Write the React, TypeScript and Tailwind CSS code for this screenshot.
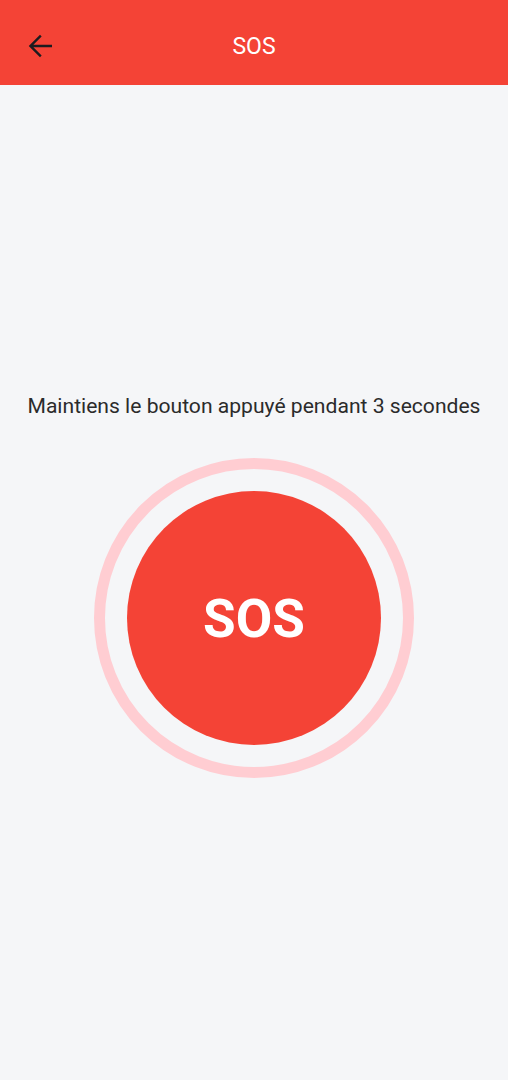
export default function App() {
  return (
    <div className="min-h-screen w-full bg-[#f5f6f8] flex flex-col" style={{ fontFamily: "Roboto, 'Noto Sans', sans-serif" }}>
      <header className="h-[85px] bg-[#f44336] flex items-center relative shrink-0">
        <button className="absolute left-[22px] top-[28px] w-[36px] h-[36px] flex items-center justify-center">
          <svg width="36" height="36" viewBox="0 0 24 24" fill="#1c1b1f">
            <path d="M20 11.1H7.6l5.5-5.5L12 4.5l-7.5 7.5 7.5 7.5 1.1-1.1-5.5-5.5H20v-1.8z" />
          </svg>
        </button>
        <h1 className="w-full text-center text-white text-[23px] leading-none pt-[7px]">SOS</h1>
      </header>

      <main className="flex flex-col items-center pt-[308px]">
        <p className="text-[21.1px] leading-[26px] text-[#2b2b2b]">
          Maintiens le bouton appuyé pendant 3 secondes
        </p>
        <div className="mt-[39px] w-[320px] h-[320px] rounded-full border-[11px] border-[#ffcdd2] flex items-center justify-center">
          <button className="w-[254px] h-[254px] rounded-full bg-[#f44336] flex items-center justify-center pt-[3px]">
            <span className="text-white text-[53px] font-bold leading-none">SOS</span>
          </button>
        </div>
      </main>
    </div>
  );
}
